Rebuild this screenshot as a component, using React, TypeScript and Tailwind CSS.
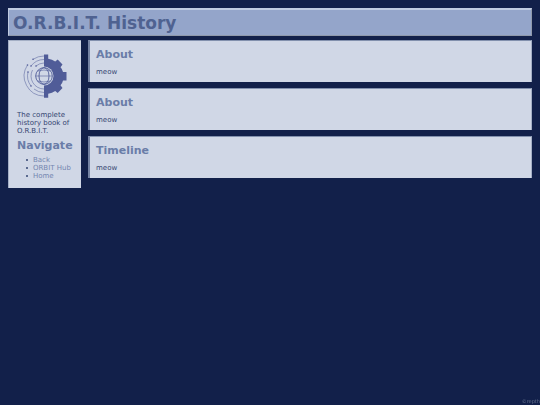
import type { ReactNode } from "react"

const links = [
  { label: "Back", href: "#back" },
  { label: "ORBIT Hub", href: "#hub" },
  { label: "Home", href: "#home" },
]

function Logo() {
  return (
    <svg viewBox="0 0 44 44" className="block h-11 w-11" fill="none" stroke="#505c98" aria-hidden="true">
      {/* gear half */}
      <path
        fill="#505c98"
        stroke="none"
        d="M21 0.500h4.200v4.300q4 .500 7 2.700l2.500-2l4.800 5l-2 2.800q2 2 2.500 4.700h3.500v8.500h-3.500q-.500 2.700-2.500 4.700l2 2.800l-4.800 5l-2.500-2q-3 2.200-7 2.700v4h-4.200z"
      />
      {/* orbit trails */}
      <g strokeWidth="0.600" opacity="0.850">
        <path d="M21 2A20 20 0 0 0 10 5.300" />
        <path d="M4.500 11A20 20 0 0 0 21 42" />
        <path d="M21 5.500A16.500 16.500 0 0 0 8 12" />
        <path d="M5 18A16.500 16.500 0 0 0 8 32" />
        <path d="M11 35A16.500 16.500 0 0 0 21 38.500" />
        <path d="M21 9A13 13 0 0 0 13 12" />
        <path d="M9.500 16A13 13 0 0 0 21 35" />
      </g>
      <g fill="#505c98" stroke="none">
        <circle cx="10" cy="5.300" r="0.800" />
        <circle cx="4.500" cy="11" r="0.800" />
        <circle cx="8" cy="12" r="0.800" />
        <circle cx="5" cy="18" r="0.800" />
        <circle cx="8" cy="32" r="0.800" />
        <circle cx="13" cy="12" r="0.800" />
      </g>
      {/* globe */}
      <circle cx="21" cy="22" r="9.500" fill="#d0d7e6" stroke="none" />
      <g strokeWidth="0.900">
        <circle cx="21" cy="22" r="8.300" />
        <ellipse cx="21" cy="22" rx="5" ry="8.300" />
        <path strokeWidth="0.600" d="M12.700 22h16.600M14.500 17q6.500-2 13 0M14.500 27q6.500 2 13 0" />
      </g>
    </svg>
  )
}

function Section({ title, children }: { title: string; children: ReactNode }) {
  return (
    <section className="border-t border-r border-l-2 border-t-[#8290ad] border-r-[#a4afc5] border-l-[#7583a3] bg-[#d0d7e6] px-1.5 pt-1.5 pb-1.5">
      <h2 className="text-[11px] leading-4 font-bold text-[#6a7da8]">{title}</h2>
      <p className="mt-[5px] text-[7px] leading-2 text-[#354672]">{children}</p>
    </section>
  )
}

export default function App() {
  return (
    <div className="flex min-h-screen flex-col gap-1 bg-[#12204a] p-2 font-['DejaVu_Sans',Verdana,sans-serif]">
      <header className="border border-t-2 border-t-[#c0cbe0] border-r-[#8f99ab] border-b-[#8f99ab] border-l-[#c0cbe0] bg-[#94a5ca] px-1 pt-px">
        <h1 className="text-[17px] leading-6 font-bold text-[#4f6291]">O.R.B.I.T. History</h1>
      </header>

      <div className="flex items-start gap-[7px]">
        <aside className="w-[73px] shrink-0 border-t border-l border-[#a4afc5] bg-[#d0d7e6] px-2 pt-[13px] pb-2">
          <div className="flex justify-center">
            <Logo />
          </div>
          <p className="mt-[13px] text-[7px] leading-2 text-[#354672]">The complete history book of O.R.B.I.T.</p>
          <nav>
            <h2 className="mt-[3px] text-[11px] leading-4 font-bold text-[#6a7da8]">Navigate</h2>
            <ul className="mt-0.5 pl-[9px] text-[7px] leading-2 whitespace-nowrap text-[#354672]">
              {links.map((link) => (
                <li
                  key={link.label}
                  className="flex items-center gap-[5px] before:size-0.5 before:rounded-full before:bg-[#354672]"
                >
                  <a href={link.href} className="text-[#7486b0]">
                    {link.label}
                  </a>
                </li>
              ))}
            </ul>
          </nav>
        </aside>

        <main className="flex min-w-0 flex-1 flex-col gap-1.5">
          <Section title="About">meow</Section>
          <Section title="About">meow</Section>
          <Section title="Timeline">meow</Section>
        </main>
      </div>

      <small className="fixed right-0 bottom-0 text-[5px] leading-[7px] text-[#65718f]">©repth</small>
    </div>
  )
}
